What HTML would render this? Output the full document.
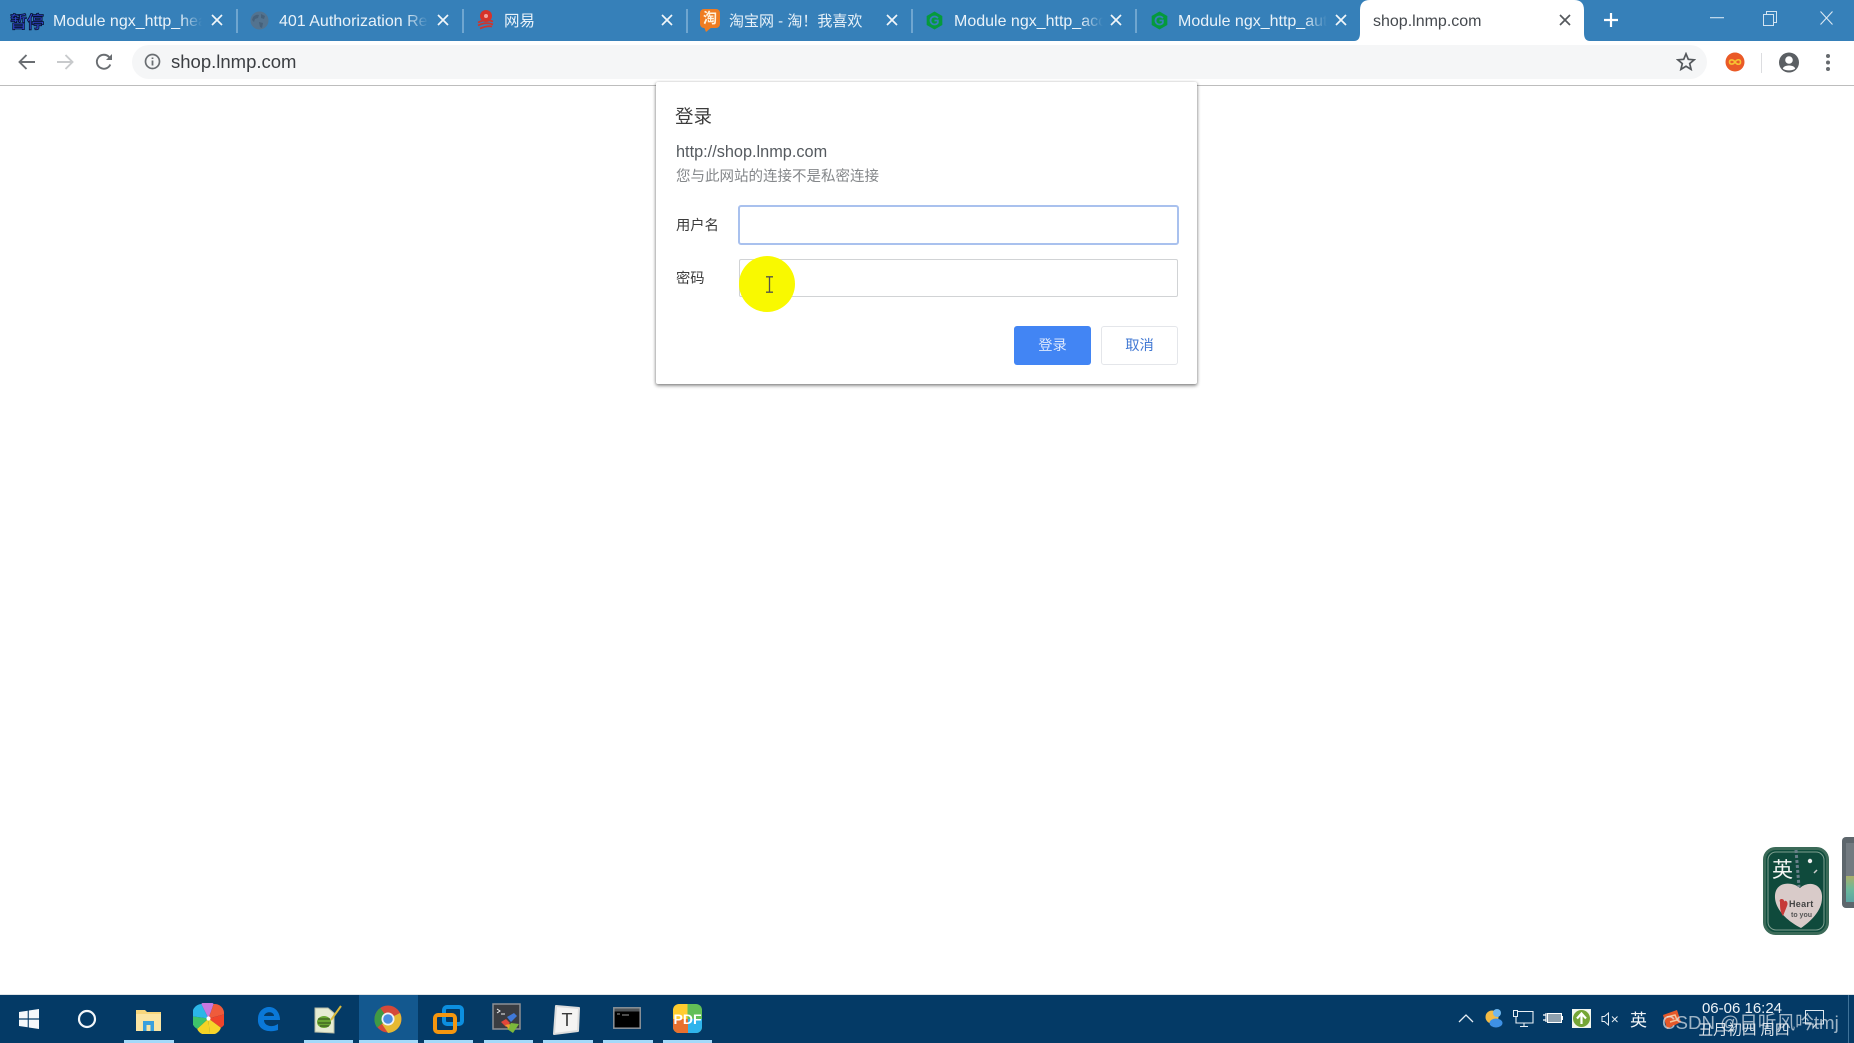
<!DOCTYPE html>
<html><head><meta charset="utf-8"><title>shop.lnmp.com</title>
<style>
html,body{margin:0;padding:0;background:#fff}
#r{position:relative;width:1854px;height:1043px;overflow:hidden;background:#fff;font-family:"Liberation Sans","Noto Sans CJK SC",sans-serif;filter:blur(.35px)}
#r>*,.a{position:absolute}
.t{position:absolute;top:11px;height:22px;line-height:22px;font-size:16px;color:#e9f2f9;white-space:nowrap;overflow:hidden;-webkit-mask-image:linear-gradient(to right,#000 85%,transparent 100%);mask-image:linear-gradient(to right,#000 85%,transparent 100%)}
.x{position:absolute;top:14px;width:12px;height:12px}
.s{position:absolute;top:9px;width:2px;height:24px;background:#6fa6d0}
.u{position:absolute;top:1040px;height:3px;background:#a5d9f9}
</style></head><body><div id="r">
<div style="left:0;top:0;width:1854px;height:41px;background:#3680b9"></div>
<div style="left:0;top:41px;width:1854px;height:44px;background:#fff;border-bottom:1px solid #bdbdbd"></div>

<!-- tabs -->
<div style="left:10px;top:9px;width:34px;height:24px;font:bold 17px/24px 'Noto Sans CJK SC',sans-serif;color:#2f43c8;-webkit-text-stroke:.8px #06122e;white-space:nowrap">暂停</div>
<div class="t" style="left:53px;width:149px">Module ngx_http_hea</div>
<svg class="x" style="left:211px" viewBox="0 0 12 12"><path d="M1 1L11 11M11 1L1 11" stroke="#f2f6fa" stroke-width="1.700"/></svg>
<div class="s" style="left:236px"></div>
<svg style="left:250px;top:11px" width="19" height="19" viewBox="0 0 19 19"><circle cx="9.500" cy="9.500" r="9" fill="#53738f"/><path d="M3 6q3-3 6-2l-1 3-3 1-1 3-2-2zM11 3l4 2-1 3-3-1zM9 11l4 1-1 5-2-1z" fill="#45617b"/></svg>
<div class="t" style="left:279px;width:149px">401 Authorization Re</div>
<svg class="x" style="left:437px" viewBox="0 0 12 12"><path d="M1 1L11 11M11 1L1 11" stroke="#f2f6fa" stroke-width="1.700"/></svg>
<div class="s" style="left:462px"></div>
<svg style="left:477px;top:10px" width="18" height="20" viewBox="0 0 18 20"><circle cx="9" cy="6" r="6" fill="#d6322a"/><circle cx="9" cy="6" r="2" fill="#f0a39e"/><path d="M1 12.500q8-4 15-1M1 15.500q8-4 15-1M3 18.500q7-3 12-2" stroke="#cf352c" stroke-width="1.800" fill="none"/></svg>
<div class="t" style="left:504px;width:150px;font-size:15.500px">网易</div>
<svg class="x" style="left:661px" viewBox="0 0 12 12"><path d="M1 1L11 11M11 1L1 11" stroke="#f2f6fa" stroke-width="1.700"/></svg>
<div class="s" style="left:686px"></div>
<div style="left:700px;top:9px;width:20px;height:19px;background:#ef7c22;border-radius:4px;color:#fff3e0;font:bold 14px/19px 'Noto Sans CJK SC',sans-serif;text-align:center;overflow:hidden">淘</div>
<svg style="left:704px;top:27px" width="8" height="5"><path d="M0 0H8L2 5Z" fill="#ef7c22"/></svg>
<div class="t" style="left:729px;width:150px;font-size:15px;-webkit-mask-image:none;mask-image:none">淘宝网 - 淘！我喜欢</div>
<svg class="x" style="left:886px" viewBox="0 0 12 12"><path d="M1 1L11 11M11 1L1 11" stroke="#f2f6fa" stroke-width="1.700"/></svg>
<div class="s" style="left:911px"></div>
<svg style="left:925px;top:11px" width="19" height="19" viewBox="0 0 17 17"><path d="M8.500 0.500L15.500 4.500V12.500L8.500 16.500L1.500 12.500V4.500Z" fill="#059a3c"/><path d="M11.500 6.500A3.600 3.600 0 1 0 11.500 10.500V8.500H8.500" stroke="#3680b9" stroke-width="1.600" fill="none"/></svg>
<div class="t" style="left:954px;width:149px">Module ngx_http_acc</div>
<svg class="x" style="left:1110px" viewBox="0 0 12 12"><path d="M1 1L11 11M11 1L1 11" stroke="#f2f6fa" stroke-width="1.700"/></svg>
<div class="s" style="left:1135px"></div>
<svg style="left:1150px;top:11px" width="19" height="19" viewBox="0 0 17 17"><path d="M8.500 0.500L15.500 4.500V12.500L8.500 16.500L1.500 12.500V4.500Z" fill="#059a3c"/><path d="M11.500 6.500A3.600 3.600 0 1 0 11.500 10.500V8.500H8.500" stroke="#3680b9" stroke-width="1.600" fill="none"/></svg>
<div class="t" style="left:1178px;width:149px">Module ngx_http_aut</div>
<svg class="x" style="left:1335px" viewBox="0 0 12 12"><path d="M1 1L11 11M11 1L1 11" stroke="#f2f6fa" stroke-width="1.700"/></svg>

<!-- active tab -->
<svg style="left:1354px;top:0" width="236" height="42" viewBox="0 0 236 42"><path d="M0 41q6 0 6-8V10Q6 0 16 0H220q10 0 10 10V33q0 8 6 8Z" fill="#fff"/></svg>
<div class="t" style="left:1373px;width:150px;color:#45494e;-webkit-mask-image:none;mask-image:none">shop.lnmp.com</div>
<svg class="x" style="left:1559px" viewBox="0 0 12 12"><path d="M1 1L11 11M11 1L1 11" stroke="#55595d" stroke-width="1.700"/></svg>
<svg style="left:1603px;top:12px" width="16" height="16" viewBox="0 0 16 16"><path d="M8 1V15M1 8H15" stroke="#fff" stroke-width="2.200"/></svg>
<svg style="left:1710px;top:17px" width="14" height="2"><rect width="14" height="1.300" fill="#bcd6ea"/></svg>
<svg style="left:1763px;top:11px" width="14" height="15" viewBox="0 0 14 15"><path d="M.5 3.500H10.500V14.500H.5ZM3.500 3V.5H13.500V11.500H11" stroke="#d3e4f1" fill="none"/></svg>
<svg style="left:1820px;top:11px" width="13" height="14" viewBox="0 0 13 14"><path d="M.5.5L12.500 13.500M12.500.5L.5 13.500" stroke="#dbe8f3" stroke-width="1.100"/></svg>

<!-- toolbar -->
<div style="left:132px;top:45px;width:1575px;height:34px;border-radius:17px;background:#f5f6f7"></div>
<svg style="left:17px;top:53px" width="20" height="18" viewBox="0 0 20 18"><path d="M18 9H3M9.500 2L2.500 9L9.500 16" stroke="#6a6e72" stroke-width="1.900" fill="none"/></svg>
<svg style="left:55px;top:53px" width="20" height="18" viewBox="0 0 20 18"><path d="M2 9H17M10.500 2L17.500 9L10.500 16" stroke="#c8cacc" stroke-width="1.900" fill="none"/></svg>
<svg style="left:95px;top:53px" width="18" height="18" viewBox="0 0 18 18"><path d="M15.300 11.500A7 7 0 1 1 14 4L16 6" stroke="#6a6e72" stroke-width="1.900" fill="none"/><path d="M11 7H17V1Z" fill="#6a6e72"/></svg>
<svg style="left:144px;top:53px" width="17" height="17" viewBox="0 0 17 17"><circle cx="8.500" cy="8.500" r="7" stroke="#6a6e72" stroke-width="1.700" fill="none"/><path d="M8.500 7.500V12.500M8.500 4.500V6" stroke="#6a6e72" stroke-width="1.800"/></svg>
<div style="left:171px;top:49px;height:26px;line-height:26px;font-size:18.500px;color:#3b3e42;white-space:nowrap">shop.lnmp.com</div>
<svg style="left:1676px;top:52px" width="20" height="19" viewBox="0 0 20 19"><path d="M10 1.800L12.300 7.300L18.200 7.800L13.700 11.600L15.100 17.400L10 14.300L4.900 17.400L6.300 11.600L1.800 7.800L7.700 7.300Z" stroke="#55595d" stroke-width="1.700" fill="none"/></svg>
<svg style="left:1725px;top:52px" width="20" height="20" viewBox="0 0 20 20"><circle cx="10" cy="10" r="9.500" fill="#ea5a27"/><path d="M10 10C8 7 4.500 7.500 4.500 10S8 13 10 10S15.500 7 15.500 10S12 13 10 10Z" stroke="#f6c233" stroke-width="1.600" fill="none"/></svg>
<div style="left:1761px;top:53px;width:1px;height:20px;background:#dcdde0"></div>
<svg style="left:1778px;top:52px" width="22" height="21" viewBox="0 0 22 21"><circle cx="11" cy="10.500" r="10" fill="#5b5f63"/><circle cx="11" cy="8" r="3.800" fill="#fff"/><path d="M4.800 16.500C6 12.500 16 12.500 17.200 16.500C15 19 7 19 4.800 16.500Z" fill="#fff"/></svg>
<svg style="left:1826px;top:53px" width="4" height="19"><circle cx="2" cy="3" r="2" fill="#666a6e"/><circle cx="2" cy="9.500" r="2" fill="#666a6e"/><circle cx="2" cy="16" r="2" fill="#666a6e"/></svg>

<!-- dialog -->
<div style="left:656px;top:82px;width:541px;height:302px;background:#fff;border-radius:2px;box-shadow:0 1px 3px rgba(0,0,0,.45),0 2px 4px rgba(0,0,0,.2)"></div>
<div style="left:675px;top:104px;font-size:18.500px;line-height:26px;color:#3c3c3c">登录</div>
<div style="left:676px;top:141px;font-size:16.300px;line-height:22px;color:#555a5f;white-space:nowrap">http://shop.lnmp.com</div>
<div style="left:676px;top:166px;font-size:14.500px;line-height:22px;color:#84878a;white-space:nowrap">您与此网站的连接不是私密连接</div>
<div style="left:676px;top:215px;font-size:14.300px;line-height:22px;color:#3c3c3c">用户名</div>
<div style="left:676px;top:268px;font-size:14.300px;line-height:22px;color:#3c3c3c">密码</div>
<div style="left:738px;top:205px;width:437px;height:36px;border:2px solid #a9c1ee;border-radius:3px;background:#fff"></div>
<div style="left:739px;top:259px;width:437px;height:36px;border:1px solid #d1d3d5;border-radius:2px;background:#fff"></div>
<div style="left:739px;top:256px;width:56px;height:56px;border-radius:50%;background:#f9f900"></div>
<svg style="left:765px;top:276px" width="9" height="17" viewBox="0 0 9 17"><path d="M1 .8H8M1 16.200H8M4.500 1V16" stroke="#55554a" stroke-width="1.300"/></svg>
<div style="left:1014px;top:326px;width:77px;height:39px;border-radius:3px;background:#4285f4;color:#dce8fd;font-size:14.300px;line-height:41px;text-align:center">登录</div>
<div style="left:1101px;top:326px;width:75px;height:37px;border:1px solid #e4e6ea;border-radius:3px;background:#fff;color:#4178d3;font-size:14.300px;line-height:39px;text-align:center">取消</div>

<!-- floating widget -->
<svg style="left:1763px;top:847px" width="66" height="88" viewBox="0 0 66 88"><rect x="1.500" y="1.500" width="63" height="85" rx="11" fill="#0f4d3d" stroke="#3b6a58" stroke-width="3"/><rect x="5" y="5" width="56" height="78" rx="8" fill="#0f4a3c" stroke="#7f9f90" stroke-width="1"/><path d="M37 41C29 34 11 34 12 51C13 64 26 75 38 81C47 75 59 64 59 51C60 37 46 33 37 41Z" fill="#d9cbc9"/><path d="M33 3L36 40" stroke="#69808a" stroke-width="3" stroke-dasharray="3 2"/><path d="M17 55c-2-4 5-4 4 0c1-3 5 0 3 4l-4 10c-3-4-3-9-3-14z" fill="#c63a38"/><text x="26" y="60" font-size="9" font-weight="bold" fill="#444" font-family="Liberation Sans,sans-serif" letter-spacing=".3">Heart</text><text x="28" y="70" font-size="7" font-weight="bold" fill="#555" font-family="Liberation Sans,sans-serif">to you</text><circle cx="47" cy="14" r="2.200" fill="#eee"/><path d="M51 26l3-3" stroke="#ccc" stroke-width="1.500"/></svg>
<div style="left:1772px;top:856px;font:21px/26px 'Noto Sans CJK SC',sans-serif;color:#f4f6f4">英</div>
<div style="left:1842px;top:837px;width:12px;height:71px;background:#5d666c;border-radius:4px 0 0 4px"></div>
<div style="left:1846px;top:843px;width:8px;height:35px;background:#727a80"></div>
<div style="left:1846px;top:876px;width:8px;height:26px;background:linear-gradient(#a9ae6a,#6db99b,#5ba5a4)"></div>

<!-- taskbar -->
<div style="left:0;top:994px;width:1854px;height:1px;background:#dfe4e8"></div>
<div style="left:0;top:995px;width:1854px;height:48px;background:#043a66"></div>
<div style="left:359px;top:995px;width:59px;height:48px;background:#13588f"></div>
<div class="u" style="left:124px;width:50px"></div><div class="u" style="left:304px;width:49px"></div><div class="u" style="left:359px;width:59px"></div><div class="u" style="left:424px;width:49px"></div><div class="u" style="left:484px;width:49px"></div><div class="u" style="left:543px;width:50px"></div><div class="u" style="left:603px;width:50px"></div><div class="u" style="left:663px;width:49px"></div>

<svg style="left:19px;top:1009px" width="20" height="20" viewBox="0 0 20 20"><path d="M0 3L8.700 1.700V9.400H0ZM9.800 1.500L20 0V9.400H9.800ZM0 10.600H8.700V18.300L0 17ZM9.800 10.600H20V20L9.800 18.500Z" fill="#f5f8fb"/></svg>
<svg style="left:76px;top:1008px" width="22" height="22" viewBox="0 0 22 22"><circle cx="11" cy="11" r="8" stroke="#f3f6f9" stroke-width="2.200" fill="none"/></svg>
<svg style="left:135px;top:1006px" width="27" height="27" viewBox="0 0 27 27"><path d="M1 4H10L12 6H26V25H1Z" fill="#f7d67c"/><rect x="1" y="8" width="25" height="17" fill="#fbe5a3"/><path d="M8 25V15H19V25H15.500V19H11.500V25Z" fill="#3aa0dd"/></svg>
<svg style="left:193px;top:1003px" width="31" height="31" viewBox="-15 -15 30 30"><path d="M0 0L-7-14A8 8 0 0 1 5-14Z" fill="#c878e0"/><path d="M0 0L5-14A9 9 0 0 1 15-4Z" fill="#ef5b3b"/><path d="M0 0L15-4A9 9 0 0 1 12 9Z" fill="#f0442b"/><path d="M0 0L12 9A9 9 0 0 1 1 15Z" fill="#f7d52a"/><path d="M0 0L1 15A9 9 0 0 1-11 10Z" fill="#f4d326"/><path d="M0 0L-11 10A9 9 0 0 1-15-2Z" fill="#3ec36a"/><path d="M0 0L-15-2A9 9 0 0 1-7-14Z" fill="#2bb6e8"/><circle r="2" fill="#fff"/></svg>
<svg style="left:256px;top:1006px" width="25" height="26" viewBox="0 0 25 26"><path d="M2 13C2 5 8 1 13 1C20 1 24 7 24 14H8C8 20 16 22 22 18V24C14 27 1 25 2 13ZM8 10H18C18 5 9 5 8 10Z" fill="#0a78d8"/></svg>
<svg style="left:314px;top:1005px" width="28" height="30" viewBox="0 0 28 30"><path d="M1 3H14L20 8V28L1 27Z" fill="#e6ecd3" stroke="#b6bba5"/><ellipse cx="10" cy="17" rx="7" ry="6" fill="#6aa733"/><path d="M4 14H16M4 18H17M6 21H15" stroke="#2d4a18"/><path d="M17 15L27 1" stroke="#d9b93c" stroke-width="2"/></svg>
<svg style="left:373px;top:1004px" width="30" height="30" viewBox="0 0 30 30"><circle cx="15" cy="15" r="13.500" fill="#d5493a"/><path d="M15 15L3 22A14 14 0 0 1 9 3Z" fill="#3f9a45" transform="rotate(-8 15 15)"/><path d="M15 15L27 9A14 14 0 0 1 15 29L9 20Z" fill="#e5b933"/><circle cx="15" cy="15" r="6.500" fill="#f1f3f6"/><circle cx="15" cy="15" r="4.800" fill="#4b8de0"/></svg>
<svg style="left:433px;top:1004px" width="31" height="31" viewBox="0 0 31 31"><rect x="11" y="3" width="18" height="17" rx="3" stroke="#0c8fe0" stroke-width="4" fill="none"/><rect x="2" y="11" width="20" height="17" rx="3" stroke="#f5960f" stroke-width="4" fill="none"/></svg>
<svg style="left:492px;top:1003px" width="30" height="32" viewBox="0 0 30 32"><rect x="1" y="1" width="27" height="25" fill="#3a3d42" stroke="#8d9094" stroke-width="1.500"/><path d="M5 6L8 8L5 10M9 11H13" stroke="#eee" fill="none"/><path d="M9 19L14 16L18 20L14 24Z" fill="#e2463a"/><path d="M15 14L22 10L25 13L19 19Z" fill="#3f79d8"/><path d="M15 26L19 20L27 21L21 30Z" fill="#7cb83b"/><path d="M13 22L18 21L17 26Z" fill="#e8a12e"/></svg>
<svg style="left:553px;top:1004px" width="28" height="32" viewBox="0 0 28 32"><path d="M3 2L26 4L25 27L1 30Z" fill="#f5f4f3" stroke="#ddd" stroke-linejoin="round" stroke-width="2"/></svg>
<div style="left:553px;top:1005px;width:28px;text-align:center;font:18px/30px 'Liberation Sans',sans-serif;color:#3a3a3a">T</div>
<svg style="left:613px;top:1007px" width="28" height="26" viewBox="0 0 28 26"><rect x=".8" y=".8" width="26.400" height="20.400" fill="#000" stroke="#8d9398" stroke-width="1.500"/><rect x="1.500" y="1.500" width="25" height="3" fill="#505559"/><path d="M4 7H7M9 8H16" stroke="#999"/></svg>
<div style="left:673px;top:1004px;width:29px;height:29px;border-radius:6px;overflow:hidden;background:linear-gradient(90deg,#ffcc2e 0 50%,#63bf56 50% 100%)"><div class="a" style="left:0;top:15px;width:15px;height:14px;background:#e8702f"></div><div class="a" style="left:15px;top:15px;width:14px;height:14px;background:#2fb4ec"></div><div class="a" style="left:0;top:6px;width:29px;text-align:center;color:#fff;font:bold 14px/18px 'Liberation Sans',sans-serif">PDF</div></div>

<!-- tray -->
<svg style="left:1458px;top:1013px" width="16" height="10" viewBox="0 0 16 10"><path d="M1 9L8 2L15 9" stroke="#e6edf3" stroke-width="1.300" fill="none"/></svg>
<svg style="left:1484px;top:1008px" width="19" height="20" viewBox="0 0 19 20"><circle cx="8" cy="9" r="6.500" fill="#f3bb45"/><circle cx="13" cy="5" r="4" fill="#70b7ee"/><ellipse cx="12" cy="15" rx="6.500" ry="4.500" fill="#3e90e5"/></svg>
<svg style="left:1513px;top:1010px" width="21" height="18" viewBox="0 0 21 18"><path d="M5 1.500H20V13H3V7M11 13V16.500M7 16.500H15" stroke="#e8eef4" stroke-width="1.100" fill="none"/><rect x=".500" y=".500" width="4" height="6" fill="#043a66" stroke="#e8eef4"/></svg>
<svg style="left:1543px;top:1011px" width="20" height="14" viewBox="0 0 20 14"><rect x="4.500" y="2.500" width="14" height="9" fill="#8ea0ae" stroke="#fff"/><rect x="18.500" y="5" width="1.500" height="4" fill="#fff"/><path d="M0 4H3M0 9H3M3 2V11" stroke="#fff" stroke-width="1.200"/></svg>
<div style="left:1572px;top:1009px;width:19px;height:19px;background:#f2f6ee"><svg style="position:absolute;left:0;top:0" width="19" height="19" viewBox="0 0 19 19"><circle cx="9.500" cy="9.500" r="8.500" fill="#75a536"/><path d="M9.500 15V5M5 9.500L9.500 4.500L14 9.500" stroke="#fff" stroke-width="2.200" fill="none"/></svg></div>
<svg style="left:1601px;top:1012px" width="18" height="14" viewBox="0 0 18 14"><path d="M1 4.500H3.500L7.500 1V13L3.500 9.500H1Z" stroke="#e6edf3" fill="none"/><path d="M11 4.500L16.500 10M16.500 4.500L11 10" stroke="#e6edf3"/></svg>
<div style="left:1630px;top:1007px;font:17px/24px 'Noto Sans CJK SC',sans-serif;color:#f0f4f7">英</div>
<svg style="left:1662px;top:1009px" width="20" height="22" viewBox="0 0 20 22"><path d="M1 6L15 1L19 13L5 20Z" fill="#e5582a"/><path d="M5 8L13 6L15 11L8 13" stroke="#f5c49a" stroke-width="1.500" fill="none"/></svg>
<svg style="left:1805px;top:1010px" width="19" height="20" viewBox="0 0 19 20"><path d="M.5.500H18.500V14H11L8 18V14H.5Z" stroke="#dfe8ef" fill="none"/></svg>
<div style="left:1700px;top:999px;width:84px;text-align:center;font-size:15px;line-height:20px;color:#eef3f7;white-space:nowrap">06-06 16:24</div>
<div style="left:1698px;top:1020px;width:92px;text-align:center;font-size:14.500px;line-height:22px;color:#dfe6ec;white-space:nowrap">丑月初四 周四</div>
<div style="left:1662px;top:1011px;font-size:18.700px;line-height:24px;color:rgba(225,232,238,.7);white-space:nowrap">CSDN @日听风吟tmj</div>
<div style="left:1848px;top:995px;width:1px;height:48px;background:#3f7299"></div>
</div></body></html>
